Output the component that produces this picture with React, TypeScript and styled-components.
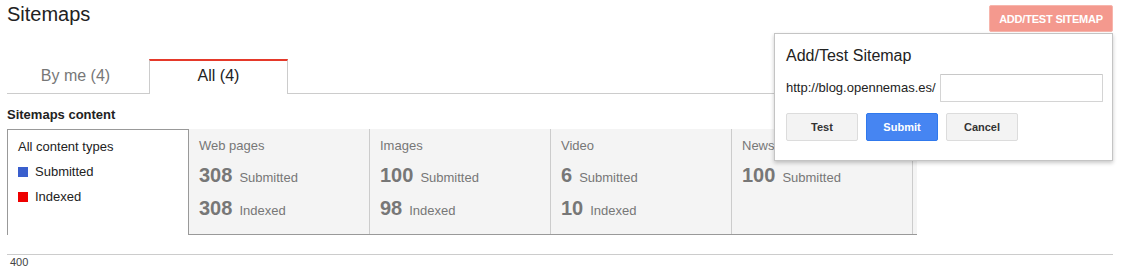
import React from "react";
import styled, { createGlobalStyle } from "styled-components";

const GlobalStyle = createGlobalStyle`
  html, body {
    margin: 0;
    padding: 0;
    background: #fff;
  }
  body {
    font-family: "Liberation Sans", Arial, Helvetica, sans-serif;
    color: #222;
  }
  * { box-sizing: border-box; }
`;

const Page = styled.div`
  padding: 0 29px 0 7px;
  width: 1142px;
`;

const Header = styled.div`
  display: flex;
  justify-content: space-between;
  align-items: flex-start;
  height: 32px;
`;

const Title = styled.h1`
  margin: 2px 0 0;
  font-size: 20px;
  line-height: 24px;
  font-weight: normal;
  color: #222;
`;

const ActionWrap = styled.div`
  position: relative;
  margin-top: 5px;
`;

const AddButton = styled.button`
  display: block;
  height: 27px;
  width: 124px;
  padding: 0;
  border: 1px solid #f7b5ac;
  border-radius: 2px;
  background: #f4998e;
  color: #fff;
  font-family: inherit;
  font-size: 11px;
  font-weight: bold;
  letter-spacing: -0.2px;
`;

const Popup = styled.div`
  position: absolute;
  top: 28px;
  right: 0;
  width: 339px;
  z-index: 5;
  background: #fff;
  border: 1px solid #c4c4c4;
  box-shadow: 0 2px 4px rgba(0, 0, 0, 0.22);
  padding: 12px 10px 19px 11px;
`;

const PopupTitle = styled.div`
  font-size: 16px;
  line-height: 20px;
  color: #222;
`;

const UrlRow = styled.div`
  display: flex;
  align-items: center;
  gap: 4px;
  margin-top: 8px;
`;

const UrlPrefix = styled.span`
  font-size: 13px;
  line-height: 16px;
  color: #222;
`;

const UrlInput = styled.input`
  width: 163px;
  height: 28px;
  border: 1px solid #d4d4d4;
  border-top-color: #c8c8c8;
  border-radius: 1px;
  padding: 0 6px;
  font-family: inherit;
  font-size: 13px;
  outline: none;
`;

const ButtonRow = styled.div`
  display: flex;
  gap: 8px;
  margin-top: 11px;
`;

const DialogButton = styled.button<{ $primary?: boolean }>`
  width: 72px;
  height: 28px;
  padding: 0;
  border-radius: 2px;
  font-family: inherit;
  font-size: 11px;
  font-weight: bold;
  border: 1px solid ${(p) => (p.$primary ? "#3079ed" : "#dcdcdc")};
  background: ${(p) => (p.$primary ? "#4685f2" : "#f3f3f3")};
  color: ${(p) => (p.$primary ? "#fff" : "#333")};
`;

const Tabs = styled.div`
  display: flex;
  align-items: flex-end;
  height: 35px;
  margin-top: 27px;
  border-bottom: 1px solid #ccc;
`;

const Tab = styled.div<{ $active?: boolean; $width: number }>`
  width: ${(p) => p.$width}px;
  height: 35px;
  margin-bottom: -1px;
  padding: 5px ${(p) => (p.$active ? 0 : 5)}px 0 0;
  text-align: center;
  font-size: 16px;
  line-height: 20px;
  color: ${(p) => (p.$active ? "#222" : "#777")};
  background: ${(p) => (p.$active ? "#fff" : "transparent")};
  border-top: 2px solid ${(p) => (p.$active ? "#e5392a" : "transparent")};
  border-left: 1px solid ${(p) => (p.$active ? "#ccc" : "transparent")};
  border-right: 1px solid ${(p) => (p.$active ? "#ccc" : "transparent")};
`;

const SectionLabel = styled.div`
  margin-top: 13px;
  font-size: 13px;
  line-height: 16px;
  font-weight: bold;
  color: #222;
`;

const Table = styled.div`
  display: flex;
  width: max-content;
  margin-top: 6px;
`;

const LegendCell = styled.div`
  width: 182px;
  height: 106px;
  border-left: 1px solid #999;
  border-top: 1px solid #999;
  border-right: 1px solid #999;
  background: #fff;
  padding: 9px 0 0 10px;
`;

const LegendTitle = styled.div`
  font-size: 13px;
  line-height: 16px;
  color: #222;
`;

const LegendItem = styled.div`
  display: flex;
  align-items: center;
  gap: 7px;
  margin-top: 9px;
  font-size: 13px;
  line-height: 16px;
  color: #222;
`;

const Swatch = styled.span<{ $color: string }>`
  width: 10px;
  height: 10px;
  background: ${(p) => p.$color};
`;

const StatsArea = styled.div`
  display: flex;
  width: 728px;
  height: 106px;
  padding-right: 4px;
  background: #f4f4f4;
  border-bottom: 1px solid #999;
`;

const StatCol = styled.div`
  width: 181px;
  height: 100%;
  border-right: 1px solid #ccc;
  padding: 9px 0 0 10px;
`;

const StatLabel = styled.div`
  font-size: 13px;
  line-height: 16px;
  color: #777;
`;

const StatRow = styled.div<{ $first?: boolean }>`
  display: flex;
  align-items: baseline;
  gap: 7px;
  height: 24px;
  margin-top: ${(p) => (p.$first ? 9 : 9)}px;
  line-height: 24px;
  color: #777;
`;

const StatNumber = styled.span`
  font-size: 20px;
  font-weight: bold;
  color: #777;
`;

const StatText = styled.span`
  font-size: 13px;
  color: #777;
`;

const Axis = styled.div`
  margin-top: 19px;
  border-top: 1px solid #ccc;
  padding: 1px 0 0 3px;
  font-size: 11px;
  line-height: 13px;
  color: #444;
`;

type Stat = { label: string; submitted: number; indexed?: number };

const stats: Stat[] = [
  { label: "Web pages", submitted: 308, indexed: 308 },
  { label: "Images", submitted: 100, indexed: 98 },
  { label: "Video", submitted: 6, indexed: 10 },
  { label: "News", submitted: 100 },
];

export default function App() {
  return (
    <>
      <GlobalStyle />
      <Page>
        <Header>
          <Title>Sitemaps</Title>
          <ActionWrap>
            <AddButton>ADD/TEST SITEMAP</AddButton>
            <Popup>
              <PopupTitle>Add/Test Sitemap</PopupTitle>
              <UrlRow>
                <UrlPrefix>http://blog.opennemas.es/</UrlPrefix>
                <UrlInput type="text" />
              </UrlRow>
              <ButtonRow>
                <DialogButton>Test</DialogButton>
                <DialogButton $primary>Submit</DialogButton>
                <DialogButton>Cancel</DialogButton>
              </ButtonRow>
            </Popup>
          </ActionWrap>
        </Header>
        <Tabs>
          <Tab $width={142}>By me (4)</Tab>
          <Tab $width={139} $active>
            All (4)
          </Tab>
        </Tabs>
        <SectionLabel>Sitemaps content</SectionLabel>
        <Table>
          <LegendCell>
            <LegendTitle>All content types</LegendTitle>
            <LegendItem>
              <Swatch $color="#3a5fcd" />
              Submitted
            </LegendItem>
            <LegendItem>
              <Swatch $color="#ee0000" />
              Indexed
            </LegendItem>
          </LegendCell>
          <StatsArea>
            {stats.map((s) => (
              <StatCol key={s.label}>
                <StatLabel>{s.label}</StatLabel>
                <StatRow $first>
                  <StatNumber>{s.submitted}</StatNumber>
                  <StatText>Submitted</StatText>
                </StatRow>
                {s.indexed !== undefined && (
                  <StatRow>
                    <StatNumber>{s.indexed}</StatNumber>
                    <StatText>Indexed</StatText>
                  </StatRow>
                )}
              </StatCol>
            ))}
          </StatsArea>
        </Table>
        <Axis>400</Axis>
      </Page>
    </>
  );
}
